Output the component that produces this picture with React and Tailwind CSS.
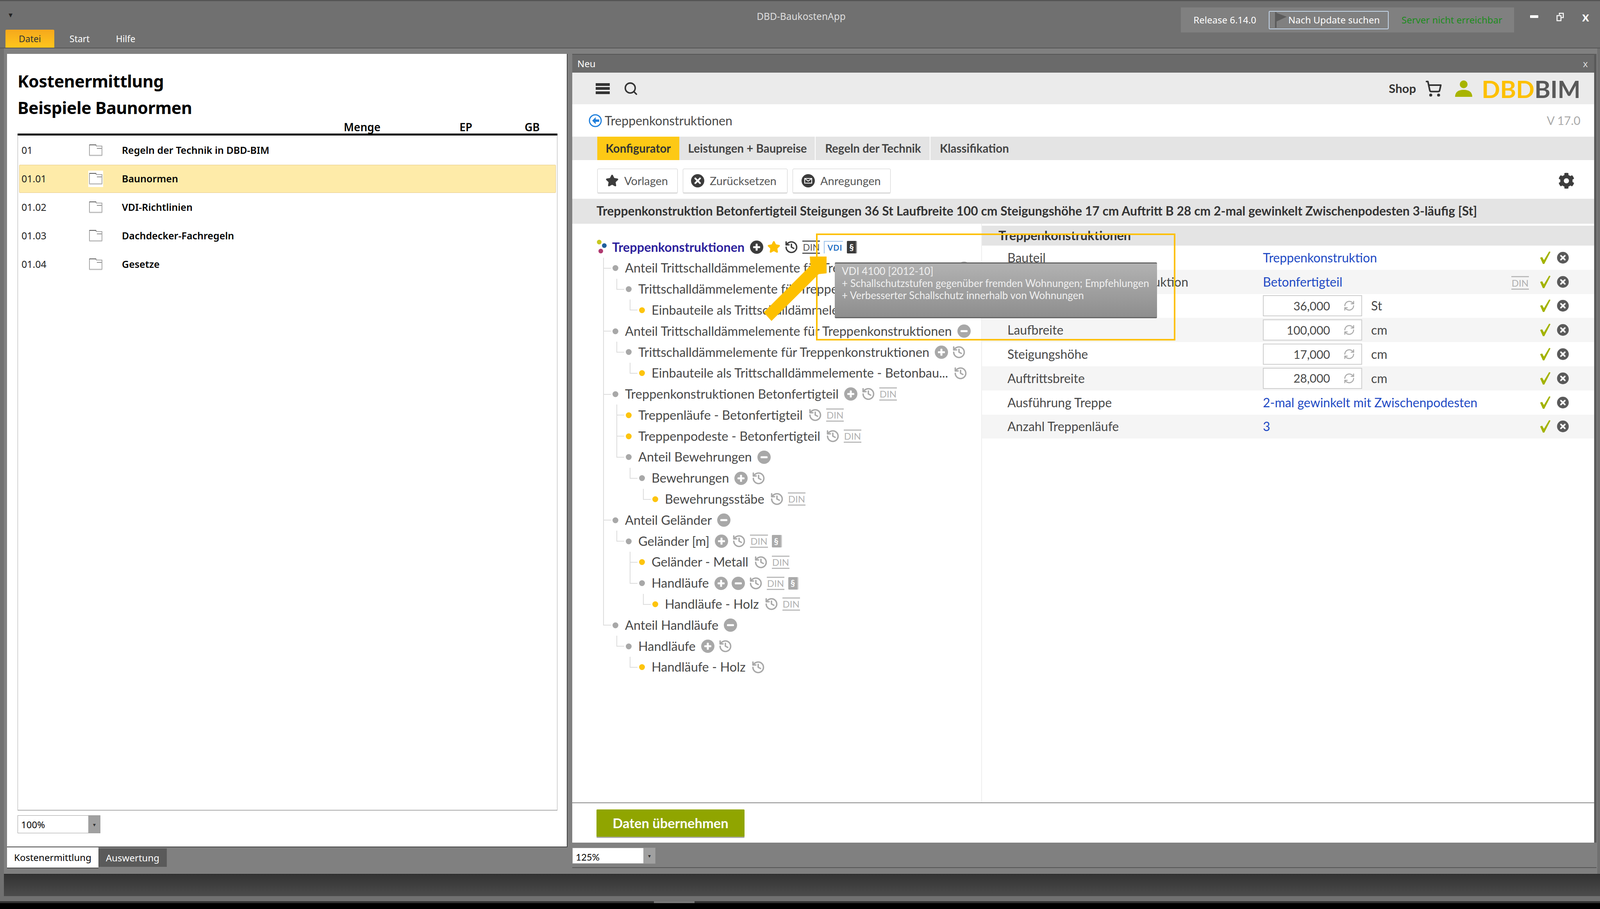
import { History, ShoppingCart, Search, RefreshCw, Star } from "lucide-react";
import { FaCog } from "react-icons/fa";

const treeData = {
  label: "Treppenkonstruktionen",
  icons: ["plus", "star", "hist", "din", "vdi", "para"],
  children: [
    {
      label: "Anteil Trittschalldämmelemente für Treppenkonstruktionen",
      icons: ["minus"],
      children: [
        {
          label: "Trittschalldämmelemente für Treppenkonstruktionen",
          icons: ["plus", "hist"],
          children: [{ label: "Einbauteile als Trittschalldämmelemente - Betonbau...", leaf: true, icons: ["hist"] }],
        },
      ],
    },
    {
      label: "Anteil Trittschalldämmelemente für Treppenkonstruktionen",
      icons: ["minus"],
      children: [
        {
          label: "Trittschalldämmelemente für Treppenkonstruktionen",
          icons: ["plus", "hist"],
          children: [{ label: "Einbauteile als Trittschalldämmelemente - Betonbau...", leaf: true, icons: ["hist"] }],
        },
      ],
    },
    {
      label: "Treppenkonstruktionen Betonfertigteil",
      icons: ["plus", "hist", "din"],
      children: [
        { label: "Treppenläufe - Betonfertigteil", leaf: true, icons: ["hist", "din"] },
        { label: "Treppenpodeste - Betonfertigteil", leaf: true, icons: ["hist", "din"] },
        {
          label: "Anteil Bewehrungen",
          icons: ["minus"],
          children: [
            {
              label: "Bewehrungen",
              icons: ["plus", "hist"],
              children: [{ label: "Bewehrungsstäbe", leaf: true, icons: ["hist", "din"] }],
            },
          ],
        },
      ],
    },
    {
      label: "Anteil Geländer",
      icons: ["minus"],
      children: [
        {
          label: "Geländer [m]",
          icons: ["plus", "hist", "din", "para"],
          children: [
            { label: "Geländer - Metall", leaf: true, icons: ["hist", "din"] },
            {
              label: "Handläufe",
              icons: ["plus", "minus", "hist", "din", "para"],
              children: [{ label: "Handläufe - Holz", leaf: true, icons: ["hist", "din"] }],
            },
          ],
        },
      ],
    },
    {
      label: "Anteil Handläufe",
      icons: ["minus"],
      children: [
        {
          label: "Handläufe",
          icons: ["plus", "hist"],
          children: [{ label: "Handläufe - Holz", leaf: true, icons: ["hist"] }],
        },
      ],
    },
  ],
};

const costRows = [
  { nr: "01", name: "Regeln der Technik in DBD-BIM" },
  { nr: "01.01", name: "Baunormen", selected: true },
  { nr: "01.02", name: "VDI-Richtlinien" },
  { nr: "01.03", name: "Dachdecker-Fachregeln" },
  { nr: "01.04", name: "Gesetze" },
];

const paramRows = [
  { label: "Bauteil", value: "Treppenkonstruktion" },
  { label: "Ausführung Treppenkonstruktion", value: "Betonfertigteil", din: true, alt: true },
  { label: "Steigungen", input: "36,000", unit: "St" },
  { label: "Laufbreite", input: "100,000", unit: "cm", alt: true },
  { label: "Steigungshöhe", input: "17,000", unit: "cm" },
  { label: "Auftrittsbreite", input: "28,000", unit: "cm", alt: true },
  { label: "Ausführung Treppe", value: "2-mal gewinkelt mit Zwischenpodesten" },
  { label: "Anzahl Treppenläufe", value: "3", alt: true },
];

const CircleIcon = ({ type, dark }) => (
  <svg viewBox="0 0 34 34" className={`w-[34px] h-[34px] shrink-0 ${dark ? "text-[#3c3c3c]" : "text-[#a8a8a8]"}`}>
    <circle cx="17" cy="17" r="17" fill="currentColor" />
    <rect x="8" y="14.5" width="18" height="5" rx="1.5" fill="#fff" />
    {type === "plus" && <rect x="14.5" y="8" width="5" height="18" rx="1.5" fill="#fff" />}
  </svg>
);

const DinMark = ({ dark }) => (
  <span
    className={`shrink-0 border-y-[3px] px-px text-[24px] leading-[28px] ${
      dark ? "border-[#555] text-[#555]" : "border-[#bbb] text-[#b0b0b0]"
    }`}
  >
    DIN
  </span>
);

const ParaMark = ({ dark }) => (
  <span
    className={`shrink-0 flex h-[32px] w-[26px] items-center justify-center rounded-[2px] border-r-[3px] text-[23px] font-bold text-white ${
      dark ? "bg-[#3a3a3a] border-[#999]" : "bg-[#aaa] border-[#ccc]"
    }`}
  >
    §
  </span>
);

const TreeIcon = ({ name, dark }) => {
  if (name === "plus" || name === "minus") return <CircleIcon type={name} dark={dark} />;
  if (name === "star") return <Star className="w-[34px] h-[34px] shrink-0 text-[#fdc000]" fill="currentColor" />;
  if (name === "hist")
    return (
      <History
        className={`w-[36px] h-[36px] shrink-0 ${dark ? "text-[#3c3c3c]" : "text-[#a8a8a8]"}`}
        strokeWidth={2.4}
      />
    );
  if (name === "din") return <DinMark dark={dark} />;
  if (name === "para") return <ParaMark dark={dark} />;
  return (
    <span className="shrink-0 border-l-2 border-t-2 border-[#9cc2ea] pl-[7px] pr-[2px] text-[20px] leading-[30px] font-bold tracking-wider text-[#1f6fc4]">
      VDI
    </span>
  );
};

const TreeNode = ({ node, last }) => (
  <div className="relative">
    <div className={`absolute left-0 top-0 w-[2px] bg-[#dcdcdc] ${last ? "h-[27px]" : "h-full"}`} />
    <div className="absolute left-0 top-[26px] h-[2px] w-[20px] bg-[#dcdcdc]" />
    <div className="flex h-[53.8px] items-center pl-[24px]">
      <div className={`h-[15px] w-[15px] shrink-0 rounded-full ${node.leaf ? "bg-[#fdc40d]" : "bg-[#a8a8a8]"}`} />
      <span className="ml-[17px] whitespace-nowrap text-[32.5px] text-[#484848]">{node.label}</span>
      <div className="ml-[14px] flex items-center gap-[10px]">
        {node.icons.map((icon, i) => (
          <TreeIcon key={i} name={icon} />
        ))}
      </div>
    </div>
    {node.children && (
      <div className="ml-[34px]">
        {node.children.map((child, i) => (
          <TreeNode key={i} node={child} last={i === node.children.length - 1} />
        ))}
      </div>
    )}
  </div>
);

const DocIcon = () => (
  <svg viewBox="0 0 34 30" className="h-[30px] w-[36px]" fill="none">
    <path d="M1 28V1h17v3h15v24z" fill="#fff" stroke="#8a8a8a" strokeWidth="1.5" />
    <path d="M1 1h17" stroke="#555" strokeWidth="2" />
    <path d="M20 10h12" stroke="#8a8a8a" strokeWidth="2" />
    <path d="M1 28h32" stroke="#bbb" strokeWidth="3" />
  </svg>
);

const ZoomSelect = ({ value, width }) => (
  <div className={`flex h-[46px] border border-[#999] bg-white ${width}`}>
    <span className="flex-1 pl-[8px] text-[24px] leading-[46px] text-black">{value}</span>
    <div className="flex w-[30px] items-center justify-center bg-[#a0a0a0] text-[14px] text-[#333]">▾</div>
  </div>
);

const CheckAndClose = () => (
  <div className="flex items-center gap-[15px]">
    <svg viewBox="0 0 30 36" className="h-[32px] w-[30px]">
      <polygon points="0,18 6,16 11,25 26,0 30,1 12,36 8,36" fill="#a3b300" />
    </svg>
    <svg viewBox="0 0 30 30" className="h-[30px] w-[30px]">
      <circle cx="15" cy="15" r="15" fill="#5a5a5a" />
      <path d="M10 10l10 10M20 10L10 20" stroke="#fff" strokeWidth="4" strokeLinecap="round" />
    </svg>
  </div>
);

const App = () => {
  return (
    <div className="relative flex h-[2328px] w-[4104px] flex-col overflow-hidden bg-[#707070] font-[Lato,sans-serif]">
      {/* title bar */}
      <div className="flex h-[124px] shrink-0 items-start border-t-[3px] border-[#555] border-b-2 border-b-[#555]">
        <div className="flex h-full flex-1 flex-col justify-between pl-[14px]">
          <div className="mt-[22px] ml-[8px] text-[20px] leading-[24px] text-[#222]">▾</div>
          <div className="flex items-center font-['Noto_Sans'] text-[23px] text-white">
            <div className="flex h-[46px] w-[125px] items-center justify-center rounded-t-[3px] bg-linear-to-b from-[#f5a81c] to-[#ffc61c] text-[#333]">
              Datei
            </div>
            <span className="ml-[39px]">Start</span>
            <span className="ml-[67px]">Hilfe</span>
          </div>
        </div>
        <div className="mr-[16px] pt-[24px] font-['Noto_Sans'] text-[24.5px] leading-[30px] text-[#dedede]">
          DBD-BaukostenApp
        </div>
        <div className="flex flex-1 justify-end pt-[16px]">
          <div className="flex h-[64px] w-[853px] items-center bg-[#808080] pl-[32px] font-['Noto_Sans'] text-[24px] text-white">
            <span>Release 6.14.0</span>
            <div className="ml-[32px] flex h-[47px] w-[307px] items-center rounded-[3px] border-2 border-[#c4d6ea] pl-[12px]">
              <svg viewBox="0 0 34 40" className="h-[40px] w-[34px]">
                <path d="M2 0h4v40H2zM6 2l26 10L6 24z" fill="#5c5c5c" />
              </svg>
              <span className="ml-[2px]">Nach Update suchen</span>
            </div>
            <span className="ml-[33px] text-[#1c8c1c]">Server nicht erreichbar</span>
          </div>
          <div className="ml-[41px] mr-[36px] flex items-start gap-[46px] pt-[12px]">
            <div className="mt-[8px] h-[7px] w-[21px] rounded-[1px] bg-white" />
            <svg viewBox="0 0 20 22" className="h-[24px] w-[20px]" fill="none" stroke="#fff" strokeWidth="2.5">
              <path d="M8 6V2h10v11h-5M2 8h10v13H2z" />
            </svg>
            <span className="mt-[-8px] text-[34px] leading-[38px] font-bold text-white">x</span>
          </div>
        </div>
      </div>

      {/* panels */}
      <div className="ml-[10px] mr-[15px] flex h-[2114px] shrink-0 gap-[12px] bg-[#808080] pl-[8px] pt-[14px]">
        <div className="flex w-[1435px] shrink-0 flex-col">
          <div className="flex h-[2032px] flex-col border-r-2 border-b-2 border-[#444] bg-white px-[27px] font-['Noto_Sans'] text-black">
            <div className="pt-[36px] text-[43px] leading-[68px] font-bold tracking-[-0.5px]">
              <div>Kostenermittlung</div>
              <div>Beispiele Baunormen</div>
            </div>
            <div className="flex h-[32px] items-start text-[28px] leading-[30px] font-semibold">
              <span className="ml-[835px]">Menge</span>
              <span className="ml-[202px]">EP</span>
              <span className="ml-[134px]">GB</span>
            </div>
            <div className="h-[5px] w-[1382px] bg-black" />
            <div className="flex h-[1729px] w-[1382px] flex-col border-x border-b-2 border-[#aaa] pt-[2px]">
              {costRows.map((row) => (
                <div
                  key={row.nr}
                  className={`mx-[3px] mb-px flex h-[72px] items-center text-[25px] ${
                    row.selected ? "rounded-[2px] border border-[#e4c88a] bg-[#feeba9]" : "border border-transparent"
                  }`}
                >
                  <span className="w-[176px] pl-[5px] text-[#222]">{row.nr}</span>
                  <span className="flex w-[86px]">
                    <span className={`px-[1px] py-[6px] ${row.selected ? "bg-white" : ""}`}>
                      <DocIcon />
                    </span>
                  </span>
                  <span className="font-semibold">{row.name}</span>
                </div>
              ))}
            </div>
            <div className="mt-[12px]">
              <ZoomSelect value="100%" width="w-[212px]" />
            </div>
          </div>
          <div className="flex items-start font-['Noto_Sans'] text-[24px]">
            <div className="flex h-[54px] w-[234px] items-center justify-center border-b-2 border-[#444] bg-white text-black">
              Kostenermittlung
            </div>
            <div className="mt-[3px] flex h-[47px] w-[175px] items-center justify-center bg-[#5a5a5a] text-white">
              Auswertung
            </div>
          </div>
        </div>

        <div className="flex w-[2622px] shrink-0 flex-col">
          <div className="flex h-[2020px] flex-col border-r-[6px] border-[#5a5a5a] bg-white">
            <div className="flex h-[48px] shrink-0 items-center justify-between border-t-2 border-[#555] bg-[#6a6a6a] pl-[13px] pr-[16px] font-['Noto_Sans'] text-[24px] text-white">
              <span>Neu</span>
              <span className="text-[#ddd]">x</span>
            </div>
            <div className="flex h-[81px] shrink-0 items-center bg-[#ebebeb] pl-[60px] pr-[35px]">
              <div className="flex h-[28px] w-[36px] flex-col justify-between">
                <div className="h-[7px] bg-[#333]" />
                <div className="h-[7px] bg-[#333]" />
                <div className="h-[7px] bg-[#333]" />
              </div>
              <Search className="ml-[35px] h-[38px] w-[38px] text-[#333]" strokeWidth={2.4} />
              <span className="ml-auto text-[31px] font-bold text-[#333]">Shop</span>
              <ShoppingCart className="ml-[22px] h-[44px] w-[46px] text-[#333]" strokeWidth={2.2} />
              <svg viewBox="0 0 44 42" className="ml-[32px] h-[42px] w-[44px]">
                <circle cx="22" cy="10" r="10" fill="#a8b400" />
                <path d="M0 42c0-12 8-18 22-18s22 6 22 18z" fill="#a8b400" />
              </svg>
              <span className="ml-[24px] text-[62px] leading-[64px] font-bold">
                <span className="text-[#fdc000]">DBD</span>
                <span className="text-[#595959]">BIM</span>
              </span>
            </div>
            <div className="flex h-[83px] shrink-0 items-center pl-[42px] pr-[35px] text-[32px] text-[#484848]">
              <svg viewBox="0 0 34 34" className="h-[34px] w-[34px]" fill="none">
                <circle cx="17" cy="17" r="15" stroke="#1f7fdc" strokeWidth="3" />
                <path d="M18 8l-9 9 9 9v-6h9v-6h-9z" fill="#1f7fdc" />
              </svg>
              <span className="ml-[7px]">Treppenkonstruktionen</span>
              <span className="ml-auto text-[30px] text-[#aaa]">V 17.0</span>
            </div>
            <div className="flex h-[60px] shrink-0 items-stretch gap-[2px] bg-[#e4e4e4] pl-[64px] text-[29.5px] font-bold text-[#444]">
              <div className="flex w-[210px] items-center justify-center bg-[#fdc915] text-[#333]">Konfigurator</div>
              <div className="flex w-[347px] items-center justify-center border-r-2 border-white">
                Leistungen + Baupreise
              </div>
              <div className="flex w-[292px] items-center justify-center border-r-2 border-white">Regeln der Technik</div>
              <div className="flex items-center pl-[22px]">Klassifikation</div>
            </div>
            <div className="flex h-[99px] shrink-0 items-center gap-[13px] pl-[64px] pr-[50px] pt-[7px] text-[29px] text-[#555]">
              <button className="flex h-[62px] w-[206px] items-center rounded-[3px] border border-[#ccc] pl-[20px] shadow-[0_2px_0_#ddd]">
                <Star className="h-[34px] w-[34px] text-[#3c3c3c]" fill="currentColor" />
                <span className="ml-[14px]">Vorlagen</span>
              </button>
              <button className="flex h-[62px] w-[268px] items-center rounded-[3px] border border-[#ccc] pl-[20px] shadow-[0_2px_0_#ddd]">
                <svg viewBox="0 0 34 34" className="h-[34px] w-[34px]">
                  <circle cx="17" cy="17" r="17" fill="#3c3c3c" />
                  <path d="M11 11l12 12M23 11L11 23" stroke="#fff" strokeWidth="4.5" strokeLinecap="round" />
                </svg>
                <span className="ml-[14px]">Zurücksetzen</span>
              </button>
              <button className="flex h-[62px] w-[251px] items-center rounded-[3px] border border-[#ccc] pl-[22px] shadow-[0_2px_0_#ddd]">
                <svg viewBox="0 0 34 34" className="h-[34px] w-[34px]">
                  <circle cx="17" cy="17" r="17" fill="#3c3c3c" />
                  <path d="M8 11h18v12H8zM8 11l9 7 9-7" fill="none" stroke="#fff" strokeWidth="2" />
                </svg>
                <span className="ml-[14px]">Anregungen</span>
              </button>
              <FaCog className="ml-auto h-[42px] w-[42px] text-[#3c3c3c]" />
            </div>
            <div className="flex h-[64px] shrink-0 items-center whitespace-nowrap bg-[#e4e4e4] pl-[62px] text-[31.9px] font-bold text-[#333]">
              Treppenkonstruktion Betonfertigteil Steigungen 36 St Laufbreite 100 cm Steigungshöhe 17 cm Auftritt B 28 cm
              2-mal gewinkelt Zwischenpodesten 3-läufig [St]
            </div>
            <div className="flex h-[1484px] shrink-0 border-b-2 border-[#888]">
              {/* tree */}
              <div className="w-[1047px] shrink-0 pl-[63px] pt-[33px]">
                <div className="flex h-[53.8px] items-center">
                  <svg viewBox="0 0 26 40" className="h-[40px] w-[26px] shrink-0">
                    <circle cx="6" cy="7" r="6" fill="#c8c820" />
                    <circle cx="19" cy="16" r="6" fill="#1f5f9c" />
                    <circle cx="10" cy="30" r="6" fill="#b03a70" />
                  </svg>
                  <span className="ml-[13px] text-[32.5px] font-bold text-[#2c1f9c]">{treeData.label}</span>
                  <div className="ml-[14px] flex items-center gap-[10px]">
                    {treeData.icons.map((icon) => (
                      <TreeIcon key={icon} name={icon} dark />
                    ))}
                  </div>
                </div>
                <div className="ml-[16px]">
                  {treeData.children.map((child, i) => (
                    <TreeNode key={i} node={child} last={i === treeData.children.length - 1} />
                  ))}
                </div>
              </div>
              {/* parameters */}
              <div className="flex-1 border-l-2 border-[#eee] pt-[5px]">
                <div className="flex h-[51px] items-center bg-[#e4e4e4] pl-[42px] text-[32.5px] font-bold text-[#333]">
                  Treppenkonstruktionen
                </div>
                {paramRows.map((row) => (
                  <div
                    key={row.label}
                    className={`flex h-[61.8px] items-center pl-[65px] pr-[65px] text-[32px] text-[#484848] ${
                      row.alt ? "bg-[#f5f5f5]" : "bg-white"
                    }`}
                  >
                    <span className="w-[654px] shrink-0">{row.label}</span>
                    {row.input ? (
                      <div className="flex flex-1 items-center">
                        <div className="flex h-[54px] w-[254px] items-center justify-end border-2 border-[#ccc] bg-white pr-[16px] text-[30px]">
                          <span>{row.input}</span>
                          <RefreshCw className="ml-[34px] h-[30px] w-[30px] text-[#aaa]" />
                        </div>
                        <span className="ml-[23px]">{row.unit}</span>
                      </div>
                    ) : (
                      <span className="flex-1 text-[#2049c4]">{row.value}</span>
                    )}
                    {row.din && (
                      <span className="mr-[27px]">
                        <DinMark />
                      </span>
                    )}
                    <CheckAndClose />
                  </div>
                ))}
              </div>
            </div>
            <div className="flex h-[101px] shrink-0 items-center pl-[62px]">
              <button className="h-[70px] w-[379px] rounded-[2px] bg-[#90a500] text-[34.5px] font-bold text-white shadow-[0_3px_0_#aaa]">
                Daten übernehmen
              </button>
            </div>
          </div>
          <div className="flex h-[65px] border-b-2 border-[#555] pt-[13px]">
            <ZoomSelect value="125%" width="w-[213px] !h-[41px]" />
          </div>
        </div>
      </div>

      {/* status bar */}
      <div className="ml-[10px] h-[57px] shrink-0 border-t-2 border-[#2c2c2c] bg-linear-to-b from-[#333] to-[#4c4c4c]" />
      <div className="h-[13px] shrink-0 bg-[#707070]" />
      <div className="h-[5px] shrink-0 bg-[#333] pl-[1674px]">
        <div className="h-full w-[104px] bg-[#777]" />
      </div>
      <div className="flex-1 bg-black" />

      {/* tooltip and its callout */}
      <div className="absolute left-[2089px] top-[598px] h-[274px] w-[920px] border-[4px] border-[#fdc000]" />
      <div className="absolute left-[2137px] top-[672px] h-[143px] w-[825px] rounded-[3px] border-t-[3px] border-b-[3px] border-[#666] bg-linear-to-b from-[#b2b2b2] to-[#8e8e8e] pl-[18px] pt-[4px] text-[26px] leading-[31px] text-[#f0f0f0]">
        <div>VDI 4100 [2012-10]</div>
        <div>+ Schallschutzstufen gegenüber fremden Wohnungen; Empfehlungen</div>
        <div>+ Verbesserter Schallschutz innerhalb von Wohnungen</div>
      </div>
      <svg viewBox="0 0 4104 2328" className="absolute left-0 top-0 h-[2328px] w-[4104px] pointer-events-none">
        <polygon points="1955,800 2075,680 2073,657 2116,657 2116,700 2096,702 1975,822" fill="#fdc000" />
      </svg>
    </div>
  );
};

export default App;
